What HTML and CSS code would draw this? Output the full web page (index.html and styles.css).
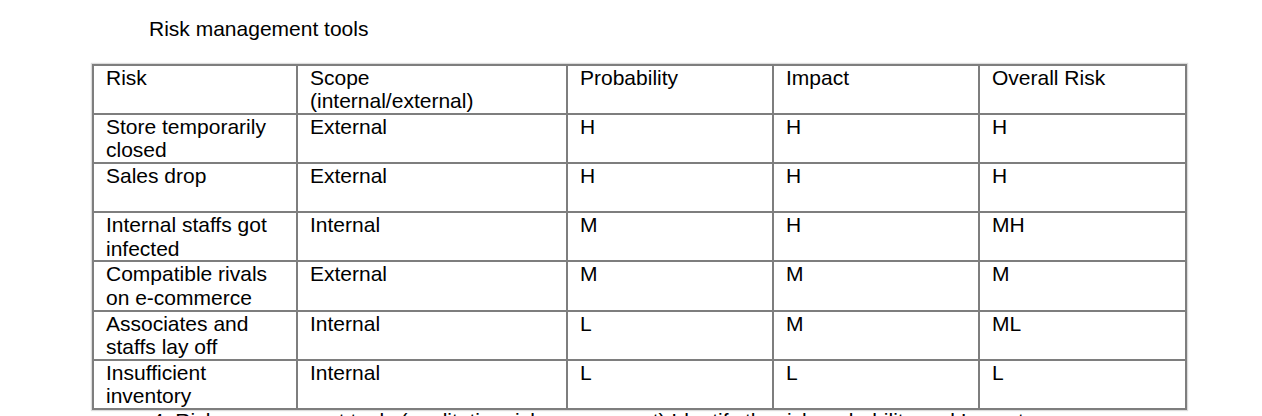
FILE: index.html
```html
<!DOCTYPE html>
<html>
<head>
<meta charset="utf-8">
<link rel="stylesheet" href="styles.css">
</head>
<body>
<div class="page">
  <p class="title">Risk management tools</p>
  <table class="risk-table">
    <colgroup>
      <col class="c1"><col class="c2"><col class="c3"><col class="c4"><col class="c5">
    </colgroup>
    <tr><td>Risk</td><td>Scope<br>(internal/external)</td><td>Probability</td><td>Impact</td><td>Overall Risk</td></tr>
    <tr><td>Store temporarily closed</td><td>External</td><td>H</td><td>H</td><td>H</td></tr>
    <tr><td>Sales drop</td><td>External</td><td>H</td><td>H</td><td>H</td></tr>
    <tr><td>Internal staffs got infected</td><td>Internal</td><td>M</td><td>H</td><td>MH</td></tr>
    <tr><td>Compatible rivals on e-commerce</td><td>External</td><td>M</td><td>M</td><td>M</td></tr>
    <tr><td>Associates and staffs lay off</td><td>Internal</td><td>L</td><td>M</td><td>ML</td></tr>
    <tr><td>Insufficient inventory</td><td>Internal</td><td>L</td><td>L</td><td>L</td></tr>
  </table>
  <p class="next">4. Risk management tools (qualitative risk assessment) Identify the risk probability and Impact</p>
</div>
</body>
</html>
```
FILE: styles.css
```css
html, body {
  margin: 0;
  padding: 0;
  background: #ffffff;
  overflow: hidden;
}
.page {
  width: 1262px;
  height: 416px;
  overflow: hidden;
  font-family: "Liberation Sans", Arial, sans-serif;
  font-size: 21px;
  line-height: 23.6px;
  color: #000;
}
.title {
  margin: 0;
  padding: 17px 0 0 149px;
}
.risk-table {
  margin: 23px 0 0 92px;
  width: 1093px;
  table-layout: fixed;
  border-collapse: collapse;
  border: 2px solid #7e7e7e;
  box-shadow: 0 0 1px 1px #dcdcdc;
}
.c1 { width: 204px; }
.c2 { width: 270px; }
.c3 { width: 206px; }
.c4 { width: 206px; }
.c5 { width: 207px; }
.risk-table td {
  border: 2px solid #7e7e7e;
  padding: 0 10px 0 12px;
  vertical-align: top;
  height: 47.2px;
}
.next {
  margin: -1px 0 0 152px;
  white-space: nowrap;
}
```
